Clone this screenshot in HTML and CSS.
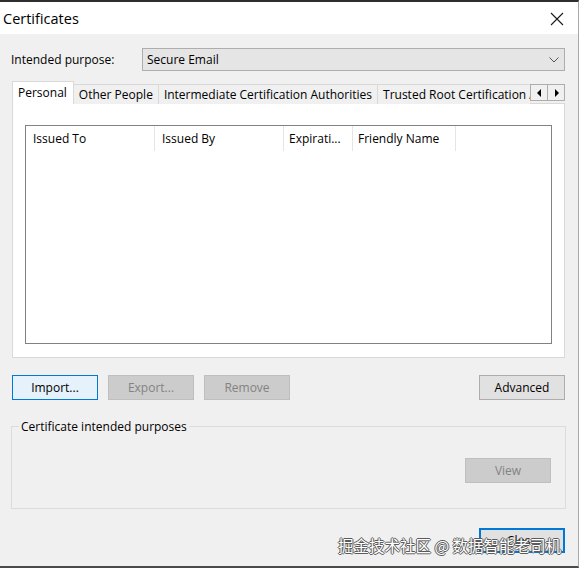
FILE: index.html
```html
<!DOCTYPE html>
<html lang="en">
<head>
  <meta charset="UTF-8" />
  <meta name="viewport" content="width=device-width, initial-scale=1.0" />
  <title>Certificates</title>
  <link rel="stylesheet" href="styles.css">
</head>
<body>
  <div class="window">
    <div class="titlebar">
      <span class="title">Certificates</span>
      <svg class="close-x" width="14" height="14" viewBox="0 0 14 14">
        <path d="M1 1 L13 13 M13 1 L1 13" stroke="#1a1a1a" stroke-width="1.1" fill="none" />
      </svg>
    </div>

    <div class="content">
      <div class="purpose-row">
        <label class="purpose-label">Intended purpose:</label>
        <div class="combo">
          <span>Secure Email</span>
          <svg width="10" height="6" viewBox="0 0 10 6">
            <path d="M0.5 0.5 L5 5 L9.5 0.5" stroke="#555" stroke-width="1" fill="none" />
          </svg>
        </div>
      </div>

      <div class="tabs">
        <div class="tab-strip">
          <div class="tab-list">
            <div class="tab active">Personal</div>
            <div class="tab">Other People</div>
            <div class="tab">Intermediate Certification Authorities</div>
            <div class="tab">Trusted Root Certification Authorities</div>
          </div>
          <div class="tab-scroll">
            <span class="scroll-btn">
              <svg width="5" height="8" viewBox="0 0 5 8"><path d="M4 0 L0 4 L4 8 Z" fill="#000" /></svg>
            </span>
            <span class="scroll-btn">
              <svg width="5" height="8" viewBox="0 0 5 8"><path d="M1 0 L5 4 L1 8 Z" fill="#000" /></svg>
            </span>
          </div>
        </div>

        <div class="tab-panel">
          <div class="listview">
            <div class="lv-header">
              <div class="col col-to">Issued To</div>
              <div class="col col-by">Issued By</div>
              <div class="col col-exp">Expirati...</div>
              <div class="col col-name">Friendly Name</div>
            </div>
          </div>
        </div>
      </div>

      <div class="button-row">
        <button class="btn focused">Import...</button>
        <button class="btn" disabled>Export...</button>
        <button class="btn" disabled>Remove</button>
        <button class="btn push-right">Advanced</button>
      </div>

      <fieldset class="group">
        <legend>Certificate intended purposes</legend>
        <div class="group-actions">
          <button class="btn" disabled>View</button>
        </div>
      </fieldset>

      <div class="footer">
        <button class="btn default">Close</button>
      </div>
    </div>

    <div class="watermark">掘金技术社区 @ 数据智能老司机</div>
  </div>
</body>
</html>
```

FILE: styles.css
```css
* {
  box-sizing: border-box;
  margin: 0;
  padding: 0;
}

body {
  background-color: #3a3a3a;
  font-family: "Open Sans", "Noto Sans", sans-serif;
  font-size: 12px;
  color: #000;
}

.window {
  position: relative;
  width: 579px;
  height: 568px;
  background-color: #f0f0f0;
  border-top: 2px solid #2e2e2e;
  border-bottom: 2px solid #4a4a4a;
  border-right: 1px solid #a8a8a8;
  overflow: hidden;
}

/* title bar */
.titlebar {
  height: 32px;
  background-color: #fff;
  display: flex;
  align-items: center;
  justify-content: space-between;
  padding: 0 14px 0 3px;
}

.title {
  font-size: 14.5px;
  color: #000;
}

.close-x {
  display: block;
  margin-top: 1px;
}

.content {
  padding: 0 13px 0 12px;
}

/* intended purpose */
.purpose-row {
  display: flex;
  align-items: center;
  margin-top: 14px;
  height: 23px;
}

.purpose-label {
  width: 131px;
  margin-left: -1px;
}

.combo {
  flex: 1;
  height: 23px;
  background-color: #e5e5e5;
  border: 1px solid #adadad;
  display: flex;
  align-items: center;
  justify-content: space-between;
  padding: 0 5px 0 4px;
}

/* tabs */
.tabs {
  margin-top: 11px;
}

.tab-strip {
  display: flex;
  align-items: flex-end;
  height: 22px;
}

.tab-list {
  flex: 1;
  display: flex;
  align-items: flex-end;
  overflow: hidden;
  height: 23px;
}

.tab {
  flex: none;
  height: 20px;
  padding: 0 5px;
  border: 1px solid #d9d9d9;
  border-bottom: none;
  border-left: none;
  background-color: #f0f0f0;
  line-height: 19px;
  white-space: nowrap;
}

.tab.active {
  height: 23px;
  background-color: #fff;
  border-left: 1px solid #d9d9d9;
  padding: 0 6px 0 5px;
  line-height: 21px;
  position: relative;
  z-index: 1;
}

.tab-scroll {
  display: flex;
  align-self: flex-start;
  margin-top: 2px;
}

.scroll-btn {
  width: 18px;
  height: 17px;
  border: 1px solid #adadad;
  background-color: #f0f0f0;
  display: flex;
  align-items: center;
  justify-content: center;
}

.scroll-btn + .scroll-btn {
  border-left: none;
  width: 17px;
}

.tab-panel {
  background-color: #fff;
  border: 1px solid #d9d9d9;
  height: 255px;
  margin-top: -1px;
  padding: 21px 12px 0 12px;
}

/* certificate list */
.listview {
  height: 219px;
  border: 1px solid #828282;
  background-color: #fff;
}

.lv-header {
  display: flex;
  height: 25px;
}

.col {
  padding-left: 7px;
  line-height: 25px;
  border-right: 1px solid #e5e5e5;
  white-space: nowrap;
}

.col-to { width: 129px; }
.col-by { width: 129px; }
.col-exp { width: 69px; padding-left: 5px; }
.col-name { width: 103px; padding-left: 5px; }

/* buttons */
.button-row {
  display: flex;
  gap: 10px;
  margin-top: 17px;
}

.btn {
  width: 86px;
  height: 25px;
  font-family: inherit;
  font-size: 12px;
  color: #000;
  background-color: #e1e1e1;
  border: 1px solid #adadad;
}

.btn:disabled {
  background-color: #cccccc;
  border-color: #bfbfbf;
  color: #838383;
}

.btn.focused {
  background-color: #e5f1fb;
  border-color: #0078d7;
}

.btn.default {
  border: 2px solid #0078d7;
}

.push-right {
  margin-left: auto;
}

/* certificate intended purposes */
.group {
  margin: 18px -1px 0 -1px;
  height: 91px;
  border: 1px solid #dcdcdc;
  padding: 0 14px 0 7px;
}

.group legend {
  padding: 0 2px;
}

.group-actions {
  display: flex;
  justify-content: flex-end;
  margin-top: 23px;
}

.footer {
  display: flex;
  justify-content: flex-end;
  margin-top: 19px;
}

/* overlay stamp */
.watermark {
  position: absolute;
  left: 338px;
  top: 532px;
  font-family: "Noto Sans CJK SC", sans-serif;
  font-size: 15.5px;
  color: #fff;
  white-space: nowrap;
  text-shadow: 1px 0 0 #5a5a5a, -1px 0 0 #5a5a5a, 0 1px 0 #5a5a5a, 0 -1px 0 #5a5a5a;
}
```
